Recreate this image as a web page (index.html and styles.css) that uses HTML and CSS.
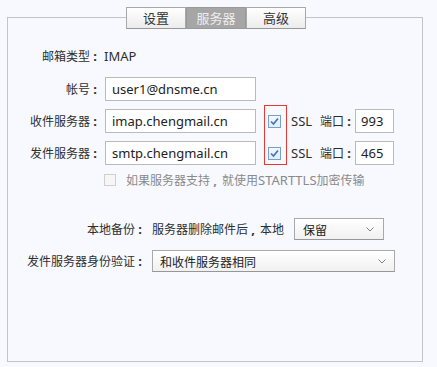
FILE: index.html
```html
<!DOCTYPE html>
<html lang="zh-CN">
<head>
<meta charset="utf-8">
<link rel="stylesheet" href="styles.css">
</head>
<body>
<div class="panel">
  <div class="tabs">
    <div class="tab">设置</div>
    <div class="tab active">服务器</div>
    <div class="tab">高级</div>
  </div>
  <div class="form">
    <div class="row r1"><span class="lbl">邮箱类型<span class="p">:</span></span><span class="lat imap">IMAP</span></div>
    <div class="row r2"><span class="lbl">帐号<span class="p">:</span></span><div class="input">user1@dnsme.cn</div></div>
    <div class="row r3"><span class="lbl">收件服务器<span class="p">:</span></span><div class="input">imap.chengmail.cn</div>
      <span class="cb"><svg width="11" height="11" viewBox="0 0 11 11"><path d="M2 5.5 L4.5 8 L9 2.5" fill="none" stroke="#3b78c3" stroke-width="1.7"/></svg></span>
      <span class="lat ssl">SSL</span><span class="portlbl">端口<span class="p">:</span></span><div class="input port">993</div></div>
    <div class="row r3"><span class="lbl">发件服务器<span class="p">:</span></span><div class="input">smtp.chengmail.cn</div>
      <span class="cb"><svg width="11" height="11" viewBox="0 0 11 11"><path d="M2 5.5 L4.5 8 L9 2.5" fill="none" stroke="#3b78c3" stroke-width="1.7"/></svg></span>
      <span class="lat ssl">SSL</span><span class="portlbl">端口<span class="p">:</span></span><div class="input port">465</div></div>
    <div class="row r5"><span class="cb off"></span><span class="hint">如果服务器支持<span class="p">,</span>就使用<span class="lat">STARTTLS</span>加密传输</span></div>
    <div class="row r6"><span class="lbl2">本地备份<span class="p">:</span></span><span class="txt">服务器删除邮件后<span class="p">,</span>本地</span>
      <div class="select s1"><span>保留</span><svg width="8" height="5" viewBox="0 0 8 5"><path d="M0.5 0.5 L4 4 L7.5 0.5" fill="none" stroke="#808080" stroke-width="1"/></svg></div></div>
    <div class="row r7"><span class="lbl2">发件服务器身份验证<span class="p">:</span></span>
      <div class="select s2"><span>和收件服务器相同</span><svg width="8" height="5" viewBox="0 0 8 5"><path d="M0.5 0.5 L4 4 L7.5 0.5" fill="none" stroke="#808080" stroke-width="1"/></svg></div></div>
  </div>
  <div class="annot"></div>
</div>
</body>
</html>
```
FILE: styles.css
```css
html, body { margin: 0; padding: 0; }
body {
  background: #f7f9fe;
  font-family: "Noto Sans CJK SC", "Noto Sans", sans-serif;
  font-size: 12px;
  color: #2e2e2e;
  height: 367px;
  overflow: hidden;
}
.p {
  display: inline-block;
  width: 12px;
  text-align: center;
  font-family: "Noto Sans", sans-serif;
  font-size: 13px;
  font-weight: bold;
  text-indent: -2px;
}
.panel {
  margin: 17px 0 0 7px;
  width: 414px;
  height: 343px;
  border: 1px solid #c2c4c8;
  position: relative;
}
.tabs {
  display: flex;
  justify-content: center;
  margin-top: -11px;
  padding-left: 2px;
}
.tab {
  box-sizing: border-box;
  width: 60px;
  height: 22px;
  border: 1px solid #a8a8a8;
  border-bottom-color: #989898;
  background: linear-gradient(#ffffff, #ececec);
  text-align: center;
  line-height: 20px;
  font-size: 13px;
  color: #333;
}
.tab.active {
  background: #a6a6a6;
  border-color: #999;
  color: #eeeeee;
}
.lat { font-family: "Noto Sans", sans-serif; font-size: 13px; }
.form { display: flex; flex-direction: column; }
.row { display: flex; align-items: center; height: 24px; }
.r1 { margin-top: 15px; }
.r2 { margin-top: 9px; }
.r3 { margin-top: 8px; }
.lbl { width: 94px; text-align: right; flex: none; }
.imap { margin-left: 2px; }
.input {
  box-sizing: border-box;
  width: 151px;
  height: 24px;
  margin-left: 3px;
  border: 1px solid #bababa;
  background: #fff;
  font-family: "Noto Sans", sans-serif;
  font-size: 13px;
  line-height: 22px;
  padding-left: 6px;
  color: #222;
  flex: none;
}
.cb {
  box-sizing: border-box;
  width: 13px;
  height: 13px;
  margin-left: 12px;
  border: 1px solid #7b9dc9;
  background: linear-gradient(#f6f9fd, #e3ecf7);
  display: flex;
  align-items: center;
  justify-content: center;
  flex: none;
}
.ssl { margin-left: 10px; }
.portlbl { margin-left: 8px; }
.input.port { width: 39px; margin-left: -1px; padding-left: 5px; }
.r5 { margin-top: 7px; height: 16px; }
.cb.off {
  width: 12px;
  height: 12px;
  margin-left: 96px;
  border-color: #cfcfcf;
  background: #f6f6f6;
}
.hint { margin-left: 10px; color: #8a8a8a; }
.r6 { margin-top: 30px; height: 22px; }
.r7 { margin-top: 10px; height: 22px; }
.lbl2 { width: 139px; text-align: right; flex: none; }
.txt { margin-left: 5px; }
.select {
  box-sizing: border-box;
  height: 22px;
  border: 1px solid #a9a9a9;
  border-bottom-color: #979797;
  background: linear-gradient(#ffffff, #f1f1f1);
  display: flex;
  align-items: center;
  justify-content: space-between;
  padding: 0 9px 0 8px;
  color: #222;
  flex: none;
}
.s1 { width: 90px; margin-left: 10px; }
.s2 { width: 243px; margin-left: 5px; padding-left: 7px; padding-right: 8px; }
.annot {
  position: absolute;
  left: 256px;
  top: 87px;
  width: 23px;
  height: 60px;
  box-sizing: border-box;
  border: 1px solid #e53935;
}
```
